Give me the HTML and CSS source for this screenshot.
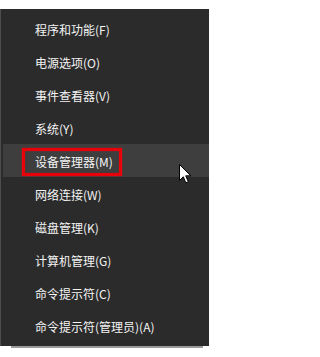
FILE: index.html
```html
<!DOCTYPE html>
<html lang="zh-CN">
<head>
<meta charset="utf-8">
<title>Win+X 菜单</title>
<link rel="stylesheet" href="styles.css">
</head>
<body>
<div class="menu">
  <ul class="items">
    <li class="item">程序和功能(F)</li>
    <li class="item">电源选项(O)</li>
    <li class="item">事件查看器(V)</li>
    <li class="item">系统(Y)</li>
    <li class="item active">设备管理器(M)<span class="mark"></span></li>
    <li class="item">网络连接(W)</li>
    <li class="item">磁盘管理(K)</li>
    <li class="item">计算机管理(G)</li>
    <li class="item">命令提示符(C)</li>
    <li class="item">命令提示符(管理员)(A)</li>
  </ul>
  <svg class="cursor" width="13" height="20" viewBox="0 0 13 20">
    <path d="M0.5 0.5 L0.5 16.5 L4.3 12.8 L6.8 18.8 L9.3 17.7 L6.8 11.8 L11.8 11.8 Z" fill="#ffffff" stroke="#000000" stroke-width="1" stroke-linejoin="miter"/>
  </svg>
</div>
<div class="shadow-line"></div>
</body>
</html>
```
FILE: styles.css
```css
html, body {
  margin: 0;
  padding: 0;
  background: #ffffff;
}
body {
  width: 210px;
  height: 357px;
  overflow: hidden;
}
.menu {
  position: relative;
  margin-top: 9px;
  width: 208px;
  height: 337px;
  background: #2b2b2b;
  border-left: 1px solid #4d4d4d;
  box-sizing: content-box;
}
.items {
  list-style: none;
  margin: 0;
  padding: 3px 0 0 2px;
}
.item {
  position: relative;
  height: 33px;
  line-height: 33px;
  padding-left: 32px;
  padding-top: 1px;
  box-sizing: border-box;
  font-family: "Noto Sans CJK SC", "Microsoft YaHei", sans-serif;
  font-size: 12px;
  color: #f4f4f4;
  white-space: nowrap;
}
.item.active {
  background: #3e3e3e;
}
.mark {
  position: absolute;
  left: 19px;
  top: 4px;
  width: 100px;
  height: 28px;
  box-sizing: border-box;
  border: 3px solid #e8000b;
  box-shadow: 0 0 1px #ff0000, inset 0 0 1px #ff0000;
}
.cursor {
  position: absolute;
  left: 178px;
  top: 155px;
}
.shadow-line {
  margin-left: 11px;
  width: 192px;
  height: 2px;
  background: #9b9b9b;
}
```
